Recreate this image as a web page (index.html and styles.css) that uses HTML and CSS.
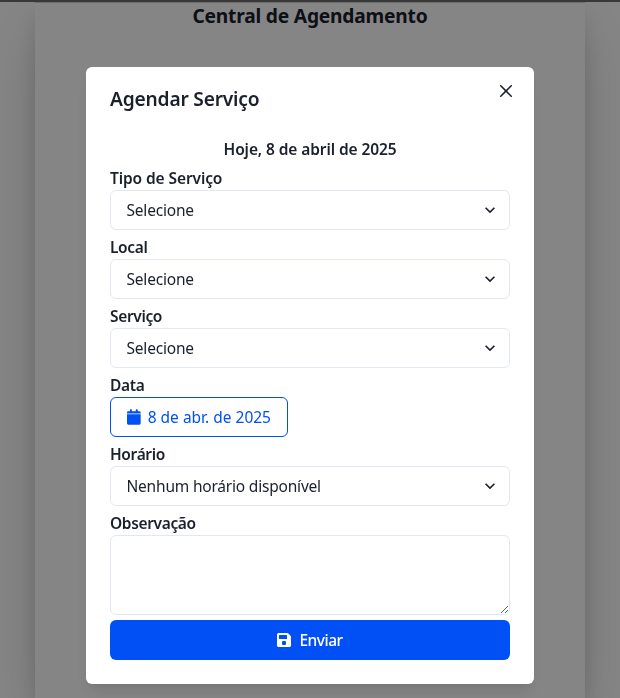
FILE: index.html
```html
<!DOCTYPE html>
<html lang="pt-BR">
<head>
<meta charset="utf-8">
<title>Central de Agendamento</title>
<link rel="stylesheet" href="styles.css">
</head>
<body>
<main class="page">
  <h1 class="page-title"><span>Central de Agendamento</span></h1>
</main>
<div class="overlay">
  <section class="modal" role="dialog" aria-labelledby="modal-title">
    <header class="modal-header">
      <h2 id="modal-title" class="modal-title"><span>Agendar Serviço</span></h2>
      <button class="close" type="button" aria-label="Fechar">
        <svg width="12" height="12" viewBox="0 0 24 24"><path fill="currentColor" d="M.439 21.44a1.5 1.5 0 0 0 2.122 2.121l9.262-9.261a.25.25 0 0 1 .354 0l9.262 9.263a1.5 1.5 0 1 0 2.122-2.121L14.3 12.177a.25.25 0 0 1 0-.354l9.263-9.262A1.5 1.5 0 0 0 21.439.44L12.177 9.7a.25.25 0 0 1-.354 0L2.561.44A1.5 1.5 0 0 0 .439 2.561L9.7 11.823a.25.25 0 0 1 0 .354Z"/></svg>
      </button>
    </header>
    <form class="modal-body">
      <p class="today">Hoje, 8 de abril de 2025</p>
      <div class="field">
        <span class="label">Tipo de Serviço</span>
        <div class="select"><span>Selecione</span><svg class="chevron" viewBox="0 0 24 24"><path fill="currentColor" d="M16.59 8.59 12 13.17 7.41 8.59 6 10l6 6 6-6z"/></svg></div>
      </div>
      <div class="field">
        <span class="label tight">Local</span>
        <div class="select"><span>Selecione</span><svg class="chevron" viewBox="0 0 24 24"><path fill="currentColor" d="M16.59 8.59 12 13.17 7.41 8.59 6 10l6 6 6-6z"/></svg></div>
      </div>
      <div class="field">
        <span class="label tight">Serviço</span>
        <div class="select"><span>Selecione</span><svg class="chevron" viewBox="0 0 24 24"><path fill="currentColor" d="M16.59 8.59 12 13.17 7.41 8.59 6 10l6 6 6-6z"/></svg></div>
      </div>
      <div class="field">
        <span class="label tight">Data</span>
        <button class="date" type="button">
          <svg class="calendar" width="14" height="16" viewBox="0 0 14 16"><path fill="currentColor" d="M0 4.500V3.500Q0 2 1.500 2H3V.5Q3 0 3.500 0h1Q5 0 5 .5V2h4V.5Q9 0 9.500 0h1q.5 0 .5.5V2h1.500Q14 2 14 3.500v1zM0 5.300h14v9.200q0 1.500-1.500 1.500h-11Q0 16 0 14.500z"/></svg>
          <span>8 de abr. de 2025</span>
        </button>
      </div>
      <div class="field">
        <span class="label tight">Horário</span>
        <div class="select"><span>Nenhum horário disponível</span><svg class="chevron" viewBox="0 0 24 24"><path fill="currentColor" d="M16.59 8.59 12 13.17 7.41 8.59 6 10l6 6 6-6z"/></svg></div>
      </div>
      <div class="field">
        <label class="label tight" for="obs">Observação</label>
        <textarea class="notes" id="obs"></textarea>
      </div>
      <button class="submit" type="button">
        <svg width="14" height="16" viewBox="0 0 14 16"><path fill="currentColor" fill-rule="evenodd" d="M1.500 1h8.800q.6 0 1 .4l2.300 2.300q.4.4.4 1v8.800q0 1.500-1.500 1.500h-11Q0 15 0 13.500v-11Q0 1 1.500 1zM2.500 3q-.5 0-.5.500v3q0 .5.500.5h7q.5 0 .5-.5v-3q0-.5-.5-.5zM6 9q-1 0-1 1v2q0 1 1 1h2q1 0 1-1v-2q0-1-1-1z"/></svg>
        <span>Enviar</span>
      </button>
    </form>
  </section>
</div>
</body>
</html>
```
FILE: styles.css
```css
* { box-sizing: border-box; margin: 0; }
html { height: 100%; overflow: hidden; }
body {
  height: 698px;
  overflow: hidden;
  border-top: 2px solid #6c6c6c;
  background: #fff;
  color: #1a202c;
  font: 15.500px/24px "Segoe UI", "Noto Sans", sans-serif;
  letter-spacing: -.2px;
}
.page {
  width: 550px;
  height: 696px;
  margin: 0 auto;
  border-top: 1px solid #d0d0d0;
  background: #fff;
  box-shadow: 0 25px 50px -12px rgba(0, 0, 0, .25), 0 12px 20px rgba(0, 0, 0, .1);
}
.page-title { font-size: 19.200px; line-height: 26px; font-weight: 700; text-align: center; }
.overlay {
  position: fixed;
  inset: 0;
  display: flex;
  justify-content: center;
  align-items: flex-start;
  padding-top: 67px;
  background: rgba(0, 0, 0, .48);
}
.modal {
  width: 448px;
  height: 617px;
  background: #fff;
  border-radius: 6px;
  box-shadow: 0 10px 15px -3px rgba(0, 0, 0, .1), 0 4px 6px -2px rgba(0, 0, 0, .05);
}
.modal-header { display: flex; justify-content: space-between; height: 62px; padding: 16px 12px 16px 24px; }
.modal-title { font-size: 19.200px; line-height: 32px; font-weight: 600; }
.close {
  display: grid;
  place-items: center;
  width: 32px;
  height: 32px;
  margin: -8px 0 -2px;
  padding: 0;
  border: 0;
  background: none;
  color: inherit;
}
.modal-body { display: flex; flex-direction: column; gap: 5px; padding: 8px 24px 24px; }
.today { font-weight: 600; text-align: center; letter-spacing: -.1px; }
.field { display: flex; flex-direction: column; align-items: stretch; }
.label { font-weight: 600; letter-spacing: -.1px; }
.tight { letter-spacing: -.35px; }
.select {
  display: flex;
  align-items: center;
  justify-content: space-between;
  height: 40px;
  padding: 0 9px 0 15.500px;
  border: 1px solid #e2e8f0;
  border-radius: 6px;
}
.chevron { width: 20px; height: 20px; }
.date, .submit {
  display: flex;
  align-items: center;
  height: 40px;
  border-radius: 6px;
  font: inherit;
}
.date {
  align-self: flex-start;
  gap: 7px;
  width: 178px;
  padding: 0 16px;
  border: 1px solid #0050f5;
  background: #fff;
  color: #0050f5;
  letter-spacing: 0;
  white-space: nowrap;
}
.notes {
  display: block;
  height: 80px;
  border: 1px solid #e2e8f0;
  border-radius: 6px;
  background: #fff;
  resize: vertical;
}
.submit {
  justify-content: center;
  gap: 8px;
  border: 0;
  background: #0050f5;
  color: #fff;
  font-weight: 500;
  letter-spacing: -.5px;
}
```
